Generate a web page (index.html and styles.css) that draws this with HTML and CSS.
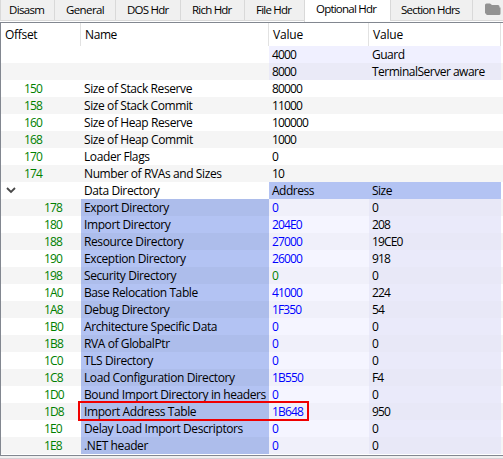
FILE: index.html
```
<!DOCTYPE html>
<html lang="en">
<head>
<meta charset="utf-8">
<title>Optional Hdr</title>
<link rel="stylesheet" href="styles.css">
</head>
<body>
<nav class="tabs">
<div class="tab disasm">Disasm</div>
<div class="tab general">General</div>
<div class="tab dos">DOS Hdr</div>
<div class="tab rich">Rich Hdr</div>
<div class="tab file">File Hdr</div>
<div class="tab active">Optional Hdr</div>
<div class="tab section">Section Hdrs</div>
<div class="tab folder"><svg width="16" height="13" viewBox="0 0 16 13"><path d="M0 2Q0 .5 1.5.5H5L7 2H13Q14.5 2 14.5 3.5V4.5H15.5V10.5Q15.5 12 14 12H2.5Q1 12 1 10.5H0Z" fill="#929292"/></svg></div>
</nav>
<main class="tree">
<div class="row head"><span>Offset</span><span>Name</span><span>Value</span><span>Value</span></div>
<div class="row flag"><span></span><span></span><span>4000</span><span class="text">Guard</span></div>
<div class="row flag"><span></span><span></span><span>8000</span><span class="text">TerminalServer aware</span></div>
<div class="row"><span>150</span><span>Size of Stack Reserve</span><span>80000</span><span></span></div>
<div class="row"><span>158</span><span>Size of Stack Commit</span><span>11000</span><span></span></div>
<div class="row"><span>160</span><span>Size of Heap Reserve</span><span>100000</span><span></span></div>
<div class="row"><span>168</span><span>Size of Heap Commit</span><span>1000</span><span></span></div>
<div class="row"><span>170</span><span>Loader Flags</span><span>0</span><span></span></div>
<div class="row"><span>174</span><span>Number of RVAs and Sizes</span><span>10</span><span></span></div>
<div class="row group"><span><svg width="10" height="7" viewBox="0 0 10 7"><path d="M1 1L5 5L9 1" fill="none" stroke="#484848" stroke-width="1.8"/></svg></span><span>Data Directory</span><span class="text">Address</span><span class="text">Size</span></div>
<div class="row entry"><span>178</span><span>Export Directory</span><span>0</span><span>0</span></div>
<div class="row entry"><span>180</span><span>Import Directory</span><span>204E0</span><span>208</span></div>
<div class="row entry"><span>188</span><span>Resource Directory</span><span>27000</span><span>19CE0</span></div>
<div class="row entry"><span>190</span><span>Exception Directory</span><span>26000</span><span>918</span></div>
<div class="row entry raw"><span>198</span><span>Security Directory</span><span>0</span><span>0</span></div>
<div class="row entry"><span>1A0</span><span>Base Relocation Table</span><span>41000</span><span>224</span></div>
<div class="row entry"><span>1A8</span><span>Debug Directory</span><span>1F350</span><span>54</span></div>
<div class="row entry"><span>1B0</span><span>Architecture Specific Data</span><span>0</span><span>0</span></div>
<div class="row entry"><span>1B8</span><span>RVA of GlobalPtr</span><span>0</span><span>0</span></div>
<div class="row entry"><span>1C0</span><span>TLS Directory</span><span>0</span><span>0</span></div>
<div class="row entry"><span>1C8</span><span>Load Configuration Directory</span><span>1B550</span><span>F4</span></div>
<div class="row entry"><span>1D0</span><span>Bound Import Directory in headers</span><span>0</span><span>0</span></div>
<div class="row entry marked"><span>1D8</span><span>Import Address Table</span><span>1B648</span><span>950</span></div>
<div class="row entry"><span>1E0</span><span>Delay Load Import Descriptors</span><span>0</span><span>0</span></div>
<div class="row entry"><span>1E8</span><span>.NET header</span><span>0</span><span>0</span></div>
</main>
<footer class="edge"></footer>
</body>
</html>
```
FILE: styles.css
```
*, *::after { box-sizing: border-box; }
body {
  margin: 0;
  width: 503px;
  height: 459px;
  overflow: hidden;
  display: flex;
  flex-direction: column;
  background: #fff;
  color: #000;
  font: 12px/17px "Open Sans", "Noto Sans", sans-serif;
  letter-spacing: -0.4px;
}
.tabs { display: flex; height: 22px; flex: none; font-size: 11.5px; letter-spacing: -0.78px; }
.tab {
  height: 21px;
  border-left: 1px solid #d9d9d9;
  border-bottom: 1px solid #d9d9d9;
  background: #f0f0f0;
  padding-top: 1px;
  padding-left: 11px;
  white-space: nowrap;
}
.disasm { width: 54px; padding-left: 8px; letter-spacing: -0.65px; }
.general { width: 61px; letter-spacing: -0.6px; }
.dos { width: 65px; }
.rich { width: 64px; }
.file { width: 60px; }
.active { width: 86px; height: 22px; background: #fff; border-bottom: 0; padding-top: 0; padding-left: 11px; }
.section { width: 82px; padding-left: 10px; }
.folder { width: 31px; padding: 3px 0 0 12px; }
.folder svg { display: block; }
.tree {
  flex: none;
  height: 434px;
  border: 1px solid #828790;
  border-right: 0;
}
.row {
  position: relative;
  display: grid;
  grid-template-columns: 80px 188px 100px 132px;
  height: 17px;
  white-space: nowrap;
}
.row:nth-child(odd) { background: #f5f5f5; }
.row span { padding-left: 3px; }
.row span:nth-child(n+3) { letter-spacing: -0.86px; }
.row span.text:nth-child(n+3) { letter-spacing: -0.5px; }
.row span:first-child { padding-left: 23px; color: #008000; letter-spacing: -0.86px; }
.row.head { height: 23px; line-height: 23px; background: #fff; }
.row.head span { border-right: 1px solid #e2e2e2; padding-left: 4px; }
.row.head span:nth-child(n+3) { letter-spacing: -0.2px; }
.row.head span:first-child { color: #000; letter-spacing: -0.3px; }
.flag span:nth-child(n+3) { background: #f0f0ff; }
.flag:nth-child(odd) span:nth-child(n+3) { background: #eaeaf7; }
.group span:nth-child(n+3) { background: #b3c3f3; }
.row.group span:first-child { padding: 5px 0 0 5px; }
.group svg { display: block; }
.row.entry span:first-child { padding-left: 43px; }
.entry span:nth-child(2) { background: #b3c3f3; }
.entry span:nth-child(3) { background: #f5f5ff; color: #00f; }
.entry span:nth-child(4) { background: #eaeafa; }
.entry:nth-child(odd) span:nth-child(2) { background: #adbdeb; }
.entry:nth-child(odd) span:nth-child(3) { background: #f0f0fa; }
.entry:nth-child(odd) span:nth-child(4) { background: #e8e8f7; }
.entry.raw span:nth-child(3) { color: #008000; }
.marked { z-index: 1; }
.marked::after {
  content: "";
  position: absolute;
  left: 77px;
  top: -2px;
  width: 231px;
  height: 20px;
  border: 2px solid #f00000;
}
.edge { height: 3px; background: #f0f0f0; border-bottom: 1px solid #d5d0d5; }
```
